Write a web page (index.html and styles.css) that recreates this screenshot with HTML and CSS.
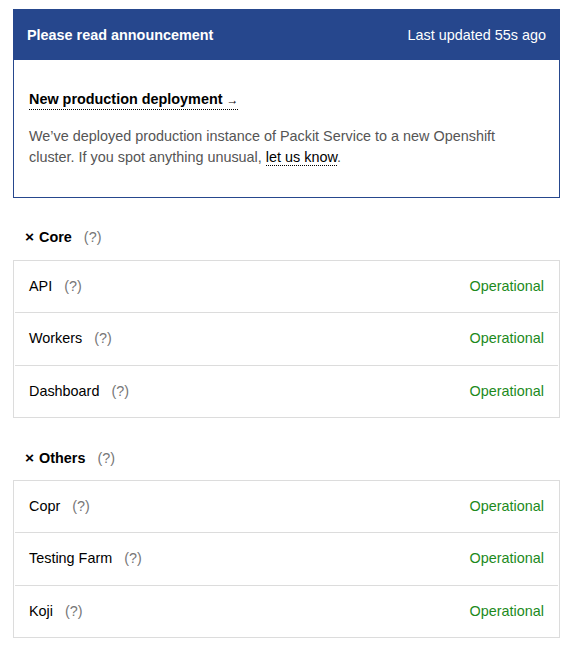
FILE: index.html
```html
<!DOCTYPE html>
<html>
<head>
<meta charset="utf-8">
<link rel="stylesheet" href="styles.css">
</head>
<body>
<div class="page">
  <section class="announce">
    <div class="announce-head">
      <span class="announce-title">Please read announcement</span>
      <span class="announce-time">Last updated 55s ago</span>
    </div>
    <div class="announce-body">
      <a class="announce-link" href="#">New production deployment <span class="arrow">→</span></a>
      <p class="announce-text">We’ve deployed production instance of Packit Service to a new Openshift cluster. If you spot anything unusual, <a class="inline-link" href="#">let us know</a>.</p>
    </div>
  </section>

  <section class="group">
    <div class="group-head"><span class="x">×</span><b>Core</b><span class="help">(?)</span></div>
    <ul class="list">
      <li class="row"><span>API<span class="help">(?)</span></span><span class="ok">Operational</span></li>
      <li class="row"><span>Workers<span class="help">(?)</span></span><span class="ok">Operational</span></li>
      <li class="row"><span>Dashboard<span class="help">(?)</span></span><span class="ok">Operational</span></li>
    </ul>
  </section>

  <section class="group">
    <div class="group-head"><span class="x">×</span><b>Others</b><span class="help">(?)</span></div>
    <ul class="list">
      <li class="row"><span>Copr<span class="help">(?)</span></span><span class="ok">Operational</span></li>
      <li class="row"><span>Testing Farm<span class="help">(?)</span></span><span class="ok">Operational</span></li>
      <li class="row"><span>Koji<span class="help">(?)</span></span><span class="ok">Operational</span></li>
    </ul>
  </section>
</div>
</body>
</html>
```
FILE: styles.css
```css
* { box-sizing: border-box; }
html, body { margin: 0; padding: 0; background: #fff; }
body {
  font-family: "Liberation Sans", Arial, sans-serif;
  font-size: 14.4px;
  color: #151515;
}
.page {
  padding: 9px 15px 0 13px;
}
.announce {
  border: 1px solid #26478d;
  border-top: none;
}
.announce-head {
  background: #26478d;
  color: #fff;
  height: 51px;
  margin: 0 -1px;
  padding: 0 14px 0 14px;
  display: flex;
  justify-content: space-between;
  align-items: center;
}
.announce-title { font-weight: bold; }
.announce-body {
  padding: 30px 15px 29px 15px;
}
.announce-link {
  display: inline-block;
  color: #000;
  font-weight: bold;
  text-decoration: none;
  border-bottom: 1px dotted #000;
  line-height: 18px;
}
.arrow { font-weight: normal; font-size: 12px; }
.announce-text {
  margin: 16px 0 0 0;
  color: #555;
  line-height: 21px;
}
.inline-link {
  color: #000;
  text-decoration: none;
  border-bottom: 1px dotted #000;
}
.group-head {
  margin: 29px 0 13px 11px;
  line-height: 20px;
  color: #000;
  display: flex;
  align-items: center;
}
.group + .group .group-head { margin-top: 30px; margin-bottom: 12px; }
.x {
  font-weight: bold;
  font-size: 15.5px;
  margin-left: 1px;
  margin-right: 5px;
}
.group-head b { font-weight: bold; }
.help {
  color: #777;
  margin-left: 12px;
}
.list {
  list-style: none;
  margin: 0;
  padding: 0 1px;
  border: 1px solid #dcdcdc;
}
.row {
  display: flex;
  justify-content: space-between;
  align-items: center;
  padding: 15px 14px;
  line-height: 21.33px;
  color: #000;
}
.row + .row { border-top: 1px solid #dcdcdc; }
.ok { color: #1c8a1c; }
```
